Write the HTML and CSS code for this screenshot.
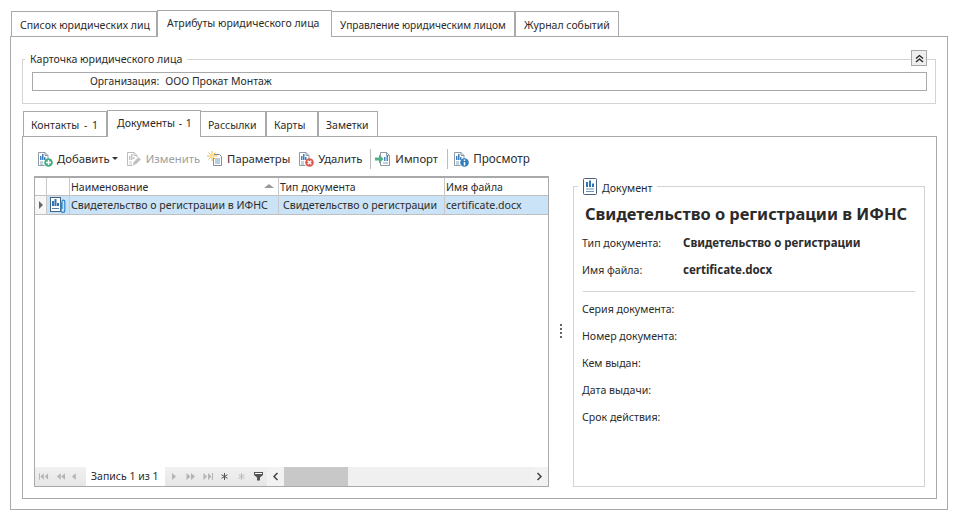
FILE: index.html
```html
<!DOCTYPE html>
<html lang="ru">
<head>
<meta charset="utf-8">
<title>Атрибуты юридического лица</title>
<link rel="stylesheet" href="styles.css">
</head>
<body>
<svg class="defs" width="0" height="0" aria-hidden="true">
  <symbol id="doc" viewBox="0 0 16 16">
    <path d="M1.500 1.500h6.500l3 3v3.500M1.500 1.500v13h6" fill="#fff" stroke="#8d99a5"/>
    <path d="M8 1.500v3h3" fill="none" stroke="#8d99a5"/>
    <path d="M3 5h1.500v4H3zM5 3h1.500v6H5zM7 6h1.500v3H7z" fill="#3f7fbf"/>
    <path d="M3 11h3M3 13h3" stroke="#8aa0b5"/>
  </symbol>
  <symbol id="doc-gray" viewBox="0 0 16 16">
    <path d="M1.500 1.500h6.500l3 3v2M1.500 1.500v13h6" fill="#fff" stroke="#bcbcbc"/>
    <path d="M8 1.500v3h3" fill="none" stroke="#bcbcbc"/>
    <path d="M3 5h1.500v4H3zM5 3h1.500v6H5zM7 6h1.500v2H7z" fill="#c4c4c4"/>
    <path d="M3 11h3M3 13h3" stroke="#cfcfcf"/>
  </symbol>
  <symbol id="first" viewBox="0 0 10 7"><path d="M0 0h1v7H0zM5 0v7L1.500 3.500zM9.500 0v7L6 3.500z"/></symbol>
  <symbol id="prev" viewBox="0 0 10 7"><path d="M5 0v7L1 3.500zM9.500 0v7L5.500 3.500z"/></symbol>
  <symbol id="next" viewBox="0 0 10 7"><path d="M5 0v7L9 3.500zM.5 0v7L4.500 3.500z"/></symbol>
  <symbol id="last" viewBox="0 0 10 7"><path d="M9 0h1v7H9zM5 0v7L8.500 3.500zM.5 0v7L4 3.500z"/></symbol>
  <symbol id="star" viewBox="0 0 9 9"><path d="M4.500 1v7M1.500 2.700l6 3.600M7.500 2.700l-6 3.600" stroke="currentColor" fill="none"/></symbol>
</svg>

<div class="tabs">
  <div class="tab tab-first">Список юридических лиц</div>
  <div class="tab tab-active">Атрибуты юридического лица</div>
  <div class="tab tab-mgmt">Управление юридическим лицом</div>
  <div class="tab tab-log">Журнал событий</div>
</div>

<main class="outer-panel">
  <div class="card-wrap">
    <fieldset class="card">
      <legend>Карточка юридического лица</legend>
      <div class="org-field"><span class="org-label">Организация:</span><span>ООО Прокат Монтаж</span></div>
    </fieldset>
    <button class="collapse" type="button" aria-label="Свернуть">
      <svg width="9" height="9" viewBox="0 0 9 9"><path d="M1 4.500l3.500-3 3.500 3M1 8l3.500-3 3.500 3" fill="none" stroke="#222" stroke-width="1.300"/></svg>
    </button>
  </div>

  <div class="tabs tabs-inner">
    <div class="tab w-contacts">Контакты - 1</div>
    <div class="tab tab-active w-docs">Документы - 1</div>
    <div class="tab w-mail">Рассылки</div>
    <div class="tab w-cards">Карты</div>
    <div class="tab w-notes">Заметки</div>
  </div>

  <section class="inner-panel">
    <div class="toolbar">
      <div class="tool tool-add">
        <svg class="ico" viewBox="0 0 16 16"><use href="#doc"/><circle cx="11.500" cy="11.500" r="4.300" fill="#3fae7d"/><path d="M9 11.500h5M11.500 9v5" stroke="#fff" stroke-width="1.400"/></svg>
        <span>Добавить</span><i class="caret"></i>
      </div>
      <div class="tool tool-edit off">
        <svg class="ico" viewBox="0 0 16 16"><use href="#doc-gray"/><path d="M6.500 14.500l1-3.500 5-5 2.500 2.500-5 5z" fill="#bdbdbd" stroke="#fff" stroke-width=".5"/></svg>
        <span>Изменить</span>
      </div>
      <div class="tool tool-param">
        <svg class="ico" viewBox="0 0 16 16"><path d="M6.500 3.500h6l2 2v9h-8z" fill="#fff" stroke="#7f8c99"/><path d="M8 8h5M8 10h5M8 12h5" stroke="#6f9fcb"/><path d="M5 0v10M0 5h10M1.500 1.500l7 7M8.500 1.500l-7 7" stroke="#f3b94a"/><circle cx="5" cy="5" r="2.200" fill="#fbe3a3"/></svg>
        <span>Параметры</span>
      </div>
      <div class="tool tool-del">
        <svg class="ico" viewBox="0 0 16 16"><use href="#doc"/><circle cx="11.500" cy="11.500" r="4.300" fill="#e0584f"/><path d="M9.700 9.700l3.600 3.600M13.300 9.700l-3.600 3.600" stroke="#fff" stroke-width="1.400"/></svg>
        <span>Удалить</span>
      </div>
      <i class="sep sep-imp"></i>
      <div class="tool tool-imp">
        <svg class="ico" viewBox="0 0 16 16"><path d="M5.500 1.500h6l3 3v10h-9z" fill="#fff" stroke="#8d99a5"/><path d="M11.500 1.500v3h3" fill="none" stroke="#8d99a5"/><path d="M9 6h1.500v4H9zM11.500 4.500H13V10h-1.500z" fill="#4a86c0"/><path d="M8 12h5" stroke="#8aa0b5"/><path d="M0 6.500h4V3.500l4.500 4.500L4 12.500v-3H0z" fill="#4fb286"/></svg>
        <span>Импорт</span>
      </div>
      <i class="sep"></i>
      <div class="tool tool-view">
        <svg class="ico" viewBox="0 0 16 16"><use href="#doc"/><circle cx="11.500" cy="11.500" r="4.300" fill="#2f7fc0"/><path d="M11.500 8.500v1.500M11.500 11v3.500" stroke="#fff" stroke-width="1.500"/></svg>
        <span>Просмотр</span>
      </div>
    </div>

    <div class="split">
      <div class="grid">
        <div class="g-row g-head">
          <div></div><div></div>
          <div class="sort">Наименование<i class="sort-arrow"></i></div>
          <div>Тип документа</div>
          <div>Имя файла</div>
        </div>
        <div class="g-row g-sel">
          <div class="ind"><i class="ind-arrow"></i></div>
          <div class="clip">
            <svg width="18" height="18" viewBox="0 0 18 18"><rect x="1.500" y="1.500" width="10" height="14" fill="#fff" stroke="#44617f"/><path d="M3 5h2v5H3zM5.500 3H7.500v7H5.500zM8 7h2v3H8z" fill="#2f74b5"/><path d="M3 12.500h7" stroke="#5a7fa5"/><path d="M12 7v7.500a1.900 1.900 0 0 0 3.800 0V5.500a1.400 1.400 0 0 0-2.800 0V13" fill="none" stroke="#2f86cc" stroke-width="1.200"/></svg>
          </div>
          <div class="cell">Свидетельство о регистрации в ИФНС</div>
          <div class="cell cell-type">Свидетельство о регистрации</div>
          <div class="cell">certificate.docx</div>
        </div>
        <div class="g-body"></div>
        <div class="pager">
          <div class="nav nav-left">
            <svg class="nv"><use href="#first"/></svg>
            <svg class="nv"><use href="#prev"/></svg>
            <svg class="nv-one" viewBox="0 0 4 7"><path d="M4 0v7L0 3.500z"/></svg>
          </div>
          <div class="rec">Запись 1 из 1</div>
          <div class="nav nav-right">
            <svg class="nv-one" viewBox="0 0 4 7"><path d="M0 0v7l4-3.500z"/></svg>
            <svg class="nv"><use href="#next"/></svg>
            <svg class="nv"><use href="#last"/></svg>
            <svg class="st"><use href="#star"/></svg>
            <svg class="st st-off"><use href="#star"/></svg>
            <svg class="funnel" viewBox="0 0 9 9"><path d="M0 0h9v3L6 5.500V8.500H3V5.500L0 3z" fill="#555"/><path d="M1 1.500h7" stroke="#fff"/></svg>
          </div>
          <div class="sb-btn"><svg width="7" height="9" viewBox="0 0 7 9"><path d="M5.500 1L2 4.500 5.500 8" fill="none" stroke="#444" stroke-width="1.500"/></svg></div>
          <div class="sb-thumb"></div>
          <div class="sb-track"></div>
          <div class="sb-btn"><svg width="7" height="9" viewBox="0 0 7 9"><path d="M1.500 1L5 4.500 1.500 8" fill="none" stroke="#444" stroke-width="1.500"/></svg></div>
        </div>
      </div>

      <div class="splitter"><i></i><i></i><i></i><i></i></div>

      <fieldset class="detail">
        <legend>
          <svg width="14" height="17" viewBox="0 0 14 17"><rect x=".5" y=".5" width="13" height="16" rx="1" fill="#fff" stroke="#44617f"/><path d="M3 4h2v5H3zM6 2.500h2V9H6zM9 5.500h2V9H9z" fill="#2f74b5"/><path d="M3 11h8M3 13.500h8" stroke="#6f93b8"/></svg>
          <span class="legend-text">Документ</span>
        </legend>
        <div class="detail-body">
          <h1>Свидетельство о регистрации в ИФНС</h1>
          <div class="d-row"><span class="d-label">Тип документа:</span><b class="d-val">Свидетельство о регистрации</b></div>
          <div class="d-row"><span class="d-label">Имя файла:</span><b class="d-val">certificate.docx</b></div>
          <hr>
          <div class="d-row">Серия документа:</div>
          <div class="d-row">Номер документа:</div>
          <div class="d-row">Кем выдан:</div>
          <div class="d-row">Дата выдачи:</div>
          <div class="d-row">Срок действия:</div>
        </div>
      </fieldset>
    </div>
  </section>
</main>
</body>
</html>
```
FILE: styles.css
```css
* { box-sizing: border-box; }
html, body { margin: 0; padding: 0; }
body {
  width: 959px; height: 521px; overflow: hidden; background: #fff;
  padding: 10px 0 0 10px;
  font: 10.5px/13px "Noto Sans", "Liberation Sans", sans-serif;
  color: #2b2b2b;
}
.defs { position: absolute; }
i { display: block; font-style: normal; }

.tabs { display: flex; align-items: flex-end; padding-left: 1px; position: relative; z-index: 1; margin-bottom: -1px; height: 27px; }
.tab {
  height: 25px; border: 1px solid #a9a9a9; border-bottom: 0;
  background: #fff; padding: 7px 0 0 8px; white-space: nowrap;
  width: 146px; margin-bottom: 1px;
}
.tab + .tab { border-left: 0; }
.tab-active { height: 27px; width: 175px; padding-top: 6px; padding-left: 9px; margin-bottom: 0; border-left: 1px solid #a9a9a9 !important; }
.tab-mgmt { width: 183px; font-size: 10.15px; }
.tab-log { width: 104px; border-left: 1px solid #a9a9a9 !important; }

.outer-panel { width: 938px; height: 474px; border: 1px solid #a9a9a9; padding: 16px 11px 0 11px; }
.card-wrap { position: relative; height: 51px; }
.card { margin: 0; padding: 0; border: 1px solid #d3d3d3; height: 51px; }
.card legend { padding: 0 5px; margin-left: 2px; line-height: 13px; font-size: 10.6px; }
.org-field { height: 19px; border: 1px solid #a9a9a9; display: flex; align-items: center; margin: 6px 8px 0 9px; }
.org-label { margin-left: 57px; margin-right: 6px; font-size: 10.3px; }
.collapse {
  position: absolute; right: 9px; top: -3px; width: 16px; height: 16px; padding: 0;
  border: 1px solid #a9a9a9; background: #eee; display: flex; align-items: center; justify-content: center;
}

.tabs-inner { margin-top: 6px; }
.tabs-inner .tab { padding-left: 7px; }
.tabs-inner .tab-active { padding-left: 9px; }
.w-contacts { width: 84px; word-spacing: 2px; }
.w-docs { width: 94px; word-spacing: 1px; }
.w-mail { width: 65px; }
.w-cards { width: 52px; border-left: 1px solid #a9a9a9 !important; }
.w-notes { width: 60px; border-left: 1px solid #a9a9a9 !important; }

.inner-panel { width: 915px; height: 363px; border: 1px solid #a9a9a9; padding: 0 11px 0 11px; }
.toolbar { display: flex; align-items: center; height: 39px; padding: 4px 0 0 3px; font-size: 11.3px; }
.tool { display: flex; align-items: center; gap: 4px; margin-right: 7px; }
.tool.off { color: #a0a0a0; }
.ico { width: 16px; height: 16px; display: block; overflow: visible; }
.caret { width: 0; height: 0; border: 3px solid transparent; border-top: 3px solid #333; border-bottom: 0; margin-left: -2px; }
.tool-add { margin-right: 8px; }
.tool-param { margin-right: 8px; }
.tool-imp { margin-right: 8px; }
.tool-view { font-size: 11.7px; }
.sep { width: 1px; height: 20px; background: #bdbdbd; margin: 0 5px 0 1px; }
.sep-imp { margin-right: 4px; }

.split { display: flex; height: 311px; }
.grid { width: 515px; height: 311px; border: 1px solid #a9a9a9; border-top-width: 2px; display: flex; flex-direction: column; }
.g-row { display: grid; grid-template-columns: 12px 23px 209px 166px 1fr; }
.g-row > div { border-right: 1px solid #c9c9c9; }
.g-row > div:last-child { border-right: 0; }
.g-head { height: 18px; border-bottom: 1px solid #c0c0c0; line-height: 18px; }
.g-head > div { padding-left: 1px; }
.sort { position: relative; }
.sort-arrow { position: absolute; right: 4px; top: 6px; width: 0; height: 0; border: 4px solid transparent; border-bottom: 4px solid #999; border-top: 0; border-left-width: 5px; border-right-width: 5px; }
.g-sel { height: 19px; background: #cbe3f6; line-height: 18px; border-bottom: 1px solid #c0c0c0; }
.ind { background: #f7f7f7; display: flex; align-items: center; justify-content: center; }
.ind-arrow { width: 0; height: 0; border-left: 4px solid #666; border-top: 4px solid transparent; border-bottom: 4px solid transparent; }
.clip svg { display: block; margin: 0 0 0 2px; }
.cell { padding-left: 1px; white-space: nowrap; overflow: hidden; font-size: 10.6px; }
.cell-type { padding-left: 4px; }
.g-body { flex: 1; }

.pager { height: 19px; display: flex; align-items: stretch; background: #f0f0f0; line-height: 19px; }
.nav { display: flex; align-items: center; background: linear-gradient(#f1f1f1, #e6e6e6); fill: #b4b4b4; color: #555; }
.nav-left { width: 51px; padding-left: 4px; }
.nav-right { width: 102px; padding-left: 7px; }
.nv { display: block; width: 10px; height: 7px; margin-right: 7px; }
.nv-one { display: block; width: 4px; height: 7px; margin-right: 10px; }
.st { display: block; width: 9px; height: 9px; margin-right: 8px; }
.st-off { color: #bdbdbd; }
.funnel { display: block; width: 9px; height: 9px; }
.rec { width: 79px; background: #fff; padding-left: 5px; }
.sb-btn { width: 17px; background: #f2f2f2; display: flex; align-items: center; justify-content: center; }
.sb-thumb { width: 64px; background: #c8c8c8; }
.sb-track { flex: 1; background: #f0f0f0; }

.splitter { width: 24px; display: flex; flex-direction: column; align-items: center; justify-content: center; gap: 2px; padding-bottom: 2px; }
.splitter i { width: 2px; height: 2px; background: #666; }

.detail { margin: 2px 0 0; width: 352px; height: 309px; padding: 0; border: 1px solid #d3d3d3; }
.detail legend { display: flex; align-items: center; gap: 5px; padding: 0 5px; margin-left: 4px; height: 17px; font-size: 10.6px; }
.detail legend svg { display: block; }
.legend-text { padding-top: 3px; }
.detail-body { padding: 0 9px 0 8px; }
.detail h1 { margin: 9px 0 6px 3px; font-size: 16.4px; line-height: 20px; font-weight: 700; white-space: nowrap; }
.d-row { height: 27px; line-height: 27px; display: flex; font-size: 10.6px; }
.d-label { width: 101px; }
.d-val { font-weight: 700; margin-top: -1px; font-size: 11.5px; }
.detail hr { margin: 7px 0 4px 1px; border: 0; border-top: 1px solid #d3d3d3; height: 0; width: 332px; }
```
